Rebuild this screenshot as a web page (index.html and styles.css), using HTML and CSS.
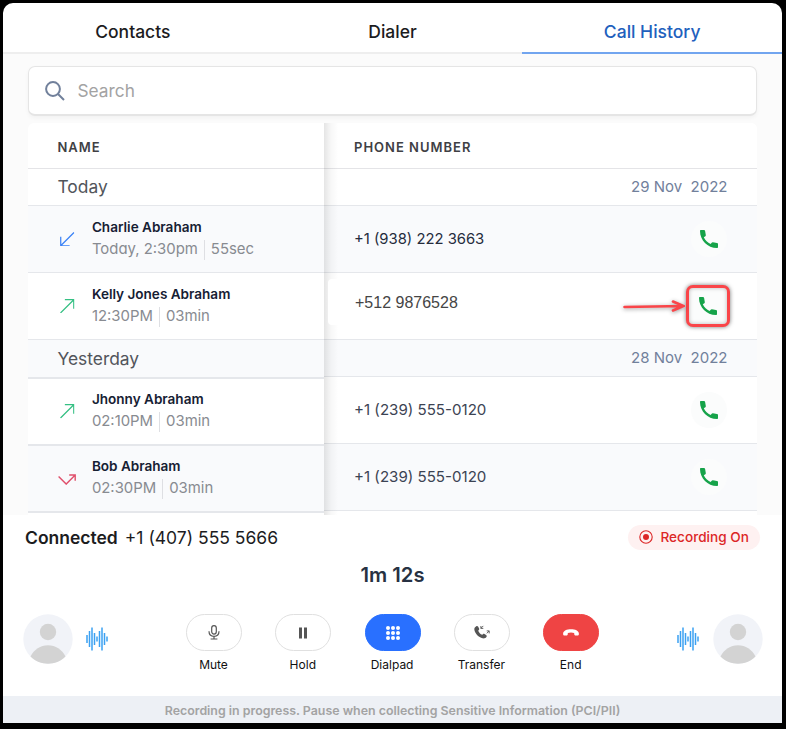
FILE: index.html
```
<!DOCTYPE html>
<html lang="en">
<head>
<meta charset="utf-8">
<title>Call History</title>
<link rel="stylesheet" href="styles.css">
</head>
<body>
<svg width="0" height="0" class="defs">
  <symbol id="phone" viewBox="0 0 18 18"><path d="M3.8 7.300c1.500 3.200 3.800 5.300 6.800 6.800l1.100-1.300c.3-.4.7-.6 1.200-.5l4.100.6c.6.1 1 .5 1 1.100V17c0 .6-.4 1-1 1C7.600 18 0 10.400 0 1c0-.6.4-1 1-1h3c.6 0 1 .3 1.100.9L5.800 5c.1.5-.1.900-.4 1.200z"/></symbol>
  <symbol id="out" viewBox="0 0 14 14"><path d="M.5 13.500 13.300.7M4.700.7h8.600v8.600" fill="none" stroke="#35c083" stroke-width="1.200"/></symbol>
  <symbol id="in" viewBox="0 0 14 14"><path d="M13.500.5.7 13.300M.7 4.700v8.600h8.600" fill="none" stroke="#3b82f6" stroke-width="1.200"/></symbol>
  <symbol id="missed" viewBox="0 0 18 11"><path d="m.6 2.500 7.600 7.600 9-9M11.200 1h6v5.800" fill="none" stroke="#e0506c" stroke-width="1.400"/></symbol>
  <symbol id="person" viewBox="0 0 50 50"><circle cx="25" cy="25" r="24.700" fill="#f1f3f8"/><circle cx="25" cy="18" r="8.200" fill="#d3d3d3"/><path d="M7.500 42.500C11 35.500 17.400 31.200 25 31.200s14 4.300 17.500 11.300C37.500 47.500 31.500 49.700 25 49.700S12.500 47.500 7.500 42.500Z" fill="#d3d3d3"/></symbol>
  <symbol id="wave" viewBox="0 0 22 24"><path d="M1 8v8M3.500 4v16M6 .5v23M8.500 6v12M11 9.500v5M13.500 4v16M16 .5v23M18.500 6v12M21 9.500v5" stroke="#3ba1f2" stroke-width="1.500"/></symbol>
</svg>
<main class="panel">
  <nav class="tabs">
    <a class="tab">Contacts</a><a class="tab">Dialer</a><a class="tab active">Call History</a>
  </nav>
  <section class="history">
    <div class="search">
      <svg width="20" height="20" viewBox="0 0 20 20"><path d="M8 1.100a6.900 6.900 0 1 1 0 13.800A6.900 6.900 0 0 1 8 1.100ZM13 13l6 6" fill="none" stroke="#71809b" stroke-width="2"/></svg>
      <span>Search</span>
    </div>
    <div class="table">
      <div class="names">
        <div class="head">NAME</div>
        <div class="day">Today</div>
        <div class="row tint"><svg class="dir"><use href="#in"/></svg><div class="who"><b>Charlie Abraham</b><p><span>Today, 2:30pm</span><span>55sec</span></p></div></div>
        <div class="row"><svg class="dir"><use href="#out"/></svg><div class="who"><b>Kelly Jones Abraham</b><p><span>12:30PM</span><span>03min</span></p></div></div>
        <div class="day tint second">Yesterday</div>
        <div class="row"><svg class="dir"><use href="#out"/></svg><div class="who"><b>Jhonny Abraham</b><p><span>02:10PM</span><span>03min</span></p></div></div>
        <div class="row tint"><svg class="dir missed"><use href="#missed"/></svg><div class="who"><b>Bob Abraham</b><p><span>02:30PM</span><span>03min</span></p></div></div>
      </div>
      <div class="phones">
        <div class="head">PHONE NUMBER</div>
        <div class="day">29 Nov&nbsp; 2022</div>
        <div class="row tint"><span class="num first">+1 (938) 222 3663</span><i class="call"><svg><use href="#phone"/></svg></i></div>
        <div class="row"><span class="num plain">+512 9876528</span><svg class="arrow" viewBox="0 0 62 12"><path d="M1.500 7 60 6M50 1.500l10.500 4.500L50 10.500" fill="none" stroke="#fa4549" stroke-width="2.600" stroke-linecap="round"/></svg><i class="call marked"><svg><use href="#phone"/></svg></i></div>
        <div class="day tint">28 Nov&nbsp; 2022</div>
        <div class="row"><span class="num">+1 (239) 555-0120</span><i class="call"><svg><use href="#phone"/></svg></i></div>
        <div class="row tint"><span class="num">+1 (239) 555-0120</span><i class="call"><svg><use href="#phone"/></svg></i></div>
      </div>
    </div>
  </section>
  <section class="current">
    <div class="status">
      <div class="connected"><b>Connected</b><span>+1 (407) 555 5666</span></div>
      <div class="recording"><svg width="14" height="14" viewBox="0 0 14 14"><circle cx="7" cy="7" r="6.200" fill="none" stroke="#dc2626" stroke-width="1.100"/><circle cx="7" cy="7" r="3" fill="#dc2626"/></svg><span>Recording On</span></div>
    </div>
    <div class="timer">1m 12s</div>
    <div class="controls">
      <svg class="avatar"><use href="#person"/></svg>
      <svg class="wave"><use href="#wave"/></svg>
      <div class="buttons">
        <div class="control"><button><svg width="12" height="15" viewBox="0 0 12 15"><g fill="none" stroke="#555" stroke-width="1.200"><rect x="3.700" y=".7" width="4.600" height="8.400" rx="2.300"/><path d="M1 6.300c0 3.300 2 5 5 5s5-1.700 5-5M6 11.300V14M2.600 14h6.800"/></g></svg></button><span>Mute</span></div>
        <div class="control"><button><svg width="8" height="12" viewBox="0 0 8 12"><path d="M0 .5h3v11H0zM5 .5h3v11H5z" fill="#555"/></svg></button><span>Hold</span></div>
        <div class="control"><button class="blue"><svg width="14" height="14" viewBox="0 0 14 14"><g fill="#fff"><circle cx="2" cy="2" r="2"/><circle cx="7" cy="2" r="2"/><circle cx="12" cy="2" r="2"/><circle cx="2" cy="7" r="2"/><circle cx="7" cy="7" r="2"/><circle cx="12" cy="7" r="2"/><circle cx="2" cy="12" r="2"/><circle cx="7" cy="12" r="2"/><circle cx="12" cy="12" r="2"/></g></svg></button><span>Dialpad</span></div>
        <div class="control"><button><svg width="16" height="15" viewBox="0 0 16 15"><path d="M2.300 1.200c.8-.5 1.500-.1 1.900.6l.9 1.700c.3.6.2 1.200-.3 1.600l-.6.6c.8 2 2.100 3.300 4 4.100l.7-.6c.5-.4 1-.5 1.600-.1l1.600 1c.7.500.9 1.200.3 1.900-1 1.300-2.300 1.700-3.800 1.300C4.500 12.200 1.300 8.800.4 5 0 3.300.9 2 2.300 1.200Z" fill="#555"/><path d="M9.300.9 6.900 3.300M6.900 1v2.400h2.400M12.700 8.400l2.400-2.400M12.700 5.900h2.500v2.500" fill="none" stroke="#555" stroke-width=".9"/></svg></button><span>Transfer</span></div>
        <div class="control"><button class="red"><svg width="16" height="7" viewBox="0 0 16 7"><path d="M1.600 6.500C.5 6.500 0 5.800.1 4.700.3 1.700 3.800.3 8 .3s7.700 1.400 7.900 4.400c.1 1.100-.4 1.800-1.500 1.800h-1.700c-1 0-1.500-.6-1.500-1.500V4C9 3.300 7 3.300 4.800 4v1c0 .9-.5 1.500-1.500 1.500z" fill="#fff"/></svg></button><span>End</span></div>
      </div>
      <svg class="wave"><use href="#wave"/></svg>
      <svg class="avatar"><use href="#person"/></svg>
    </div>
  </section>
  <footer>Recording in progress. Pause when collecting Sensitive Information (PCI/PII)</footer>
</main>
</body>
</html>
```
FILE: styles.css
```
* { box-sizing: border-box; }
body { margin: 0; width: 786px; height: 729px; padding: 3px 4px 6px 3px; background: #000; font-family: Inter, sans-serif; overflow: hidden; }
.defs { display: block; height: 0; }
.panel { width: 779px; height: 720px; background: #fff; border-radius: 10px 10px 0 0; overflow: hidden; display: flex; flex-direction: column; }
.tabs { height: 51px; display: grid; grid-template-columns: repeat(3, 1fr); background: linear-gradient(#eee, #eee) bottom / 100% 2px no-repeat; flex: none; }
.tab { display: flex; align-items: center; justify-content: center; font-size: 17.500px; font-weight: 500; color: #1c1c1e; padding-top: 8px; border-bottom: 2px solid transparent; }
.active { color: #2160bd; border-color: #72a5ef; }
.history { height: 461px; background: #fbfbfb; padding: 12px 25px 0; flex: none; }
.search { height: 50px; border: 1px solid #e5e5e5; border-bottom-width: 2px; border-radius: 7px; background: #fff; box-shadow: 0 2px 4px #0000000a; padding-left: 16px; display: flex; align-items: center; gap: 12.500px; font-size: 17.300px; color: #a3a3a3; }
.table { margin-top: 7px; display: grid; grid-template-columns: 296px 1fr; height: 392px; overflow: hidden; background: #fff; border-radius: 6px 6px 0 0; }
.phones { background: #fff; position: relative; }
.phones::before { content: ""; position: absolute; inset: 0 auto 0 0; width: 14px; background: linear-gradient(90deg, #0000001a, #00000008 50%, transparent); }
.head { height: 46px; border-bottom: 1px solid #e4e4e7; font-size: 13px; font-weight: 600; letter-spacing: 1px; color: #404044; padding: 2px 29.500px 0; display: flex; align-items: center; }
.day { height: 37px; border-bottom: 1px solid #e5e7eb; color: #52555b; font-size: 17.400px; padding: 0 29.500px; display: flex; align-items: center; }
.names .day { padding-bottom: 1px; }
.phones .head { padding-left: 30px; }
.phones .day { justify-content: flex-end; color: #71809b; font-size: 15px; padding-bottom: 1px; }
.row { height: 67px; border-bottom: 1px solid #e5e7eb; display: flex; align-items: center; }
.tint { background: #f9fafc; }
.names .second { height: 39px; border-bottom-width: 2px; }
.names .second ~ .row { border-bottom-width: 2px; }
.names .row { padding-left: 32px; gap: 17.400px; }
.dir { width: 14.500px; height: 14.500px; flex: none; }
.dir.missed { width: 18px; height: 11px; margin: 0 -1.500px 0 -2px; position: relative; top: 1px; }
.who { margin-top: -2px; }
.row b { display: block; font-size: 13.550px; line-height: 20px; font-weight: 600; color: #162033; }
.row p { margin: 1px 0 0; font-size: 14.900px; line-height: 22px; color: #888b91; display: flex; font-feature-settings: "cv11"; }
.row p span + span { border-left: 1px solid #dedfe3; margin-left: 6px; padding-left: 6px; line-height: 18px; margin-top: 2px; }
.num { font-size: 15.100px; color: #3c4353; width: 269px; padding: 0 0 2px 30px; }
.first { color: #252c3d; font-size: 14.800px; padding-bottom: 0; }
.plain { font: 16px "Liberation Sans", sans-serif; color: #454545; position: relative; top: -4px; background: #fff; margin-left: 4px; padding: 0 0 0 27px; height: 46px; line-height: 48px; width: 265px; border-radius: 4px; }
.call { width: 36px; height: 36px; border-radius: 50%; background: #fbfcfc; margin-left: 97.500px; display: grid; place-items: center; }
.call svg { width: 18px; height: 18px; fill: #16a34a; }
.arrow { width: 62px; height: 12px; margin-left: 30px; filter: drop-shadow(0 1px 2px #0006); }
.marked { width: 44px; height: 42px; margin-left: 1px; border: 3px solid #fa4549; border-radius: 7px; box-shadow: 0 0 4px #0008, inset 0 0 4px #0004; }
.current { height: 181px; flex: none; }
.status { display: flex; justify-content: space-between; padding: 10px 22px 0; height: 36px; }
.connected { font-size: 17.500px; line-height: 26px; color: #1c1c1e; display: flex; gap: 7px; }
.connected b { font-weight: 600; }
.recording { width: 132px; height: 25px; border-radius: 13px; background: #fef1f1; color: #dc2626; font-size: 13.600px; font-weight: 500; display: flex; align-items: center; gap: 8px; padding: 0 0 1px 10.500px; white-space: nowrap; }
.timer { height: 46px; line-height: 47px; text-align: center; font-size: 20.200px; font-weight: 600; color: #273142; }
.controls { display: flex; padding: 17px 19.500px 0; align-items: flex-start; }
.avatar { width: 50px; height: 50px; }
.wave { width: 22px; height: 24px; margin: 13px 0 0 13.500px; }
.buttons { display: flex; gap: 33.300px; margin: 0 0 0 78px; width: 413px; }
.buttons + .wave { margin: 13px 13.500px 0 78px; }
.control { width: 56px; display: flex; flex-direction: column; align-items: center; gap: 6px; flex: none; font-size: 12px; line-height: 16px; color: #111; }
.control span { margin-right: 1px; }
button { width: 56px; height: 37px; padding: 0; border: 1px solid #e0e0e0; border-radius: 19px; background: #fff; display: grid; place-items: center; }
.blue { background: #2970ff; border-color: #2970ff; }
.red { background: #ef4444; border-color: #ef4444; }
footer { flex: 1; background: #edf0f5; color: #a3a3a3; font-size: 12.400px; font-weight: 600; display: flex; align-items: center; justify-content: center; padding-top: 1px; }
```
